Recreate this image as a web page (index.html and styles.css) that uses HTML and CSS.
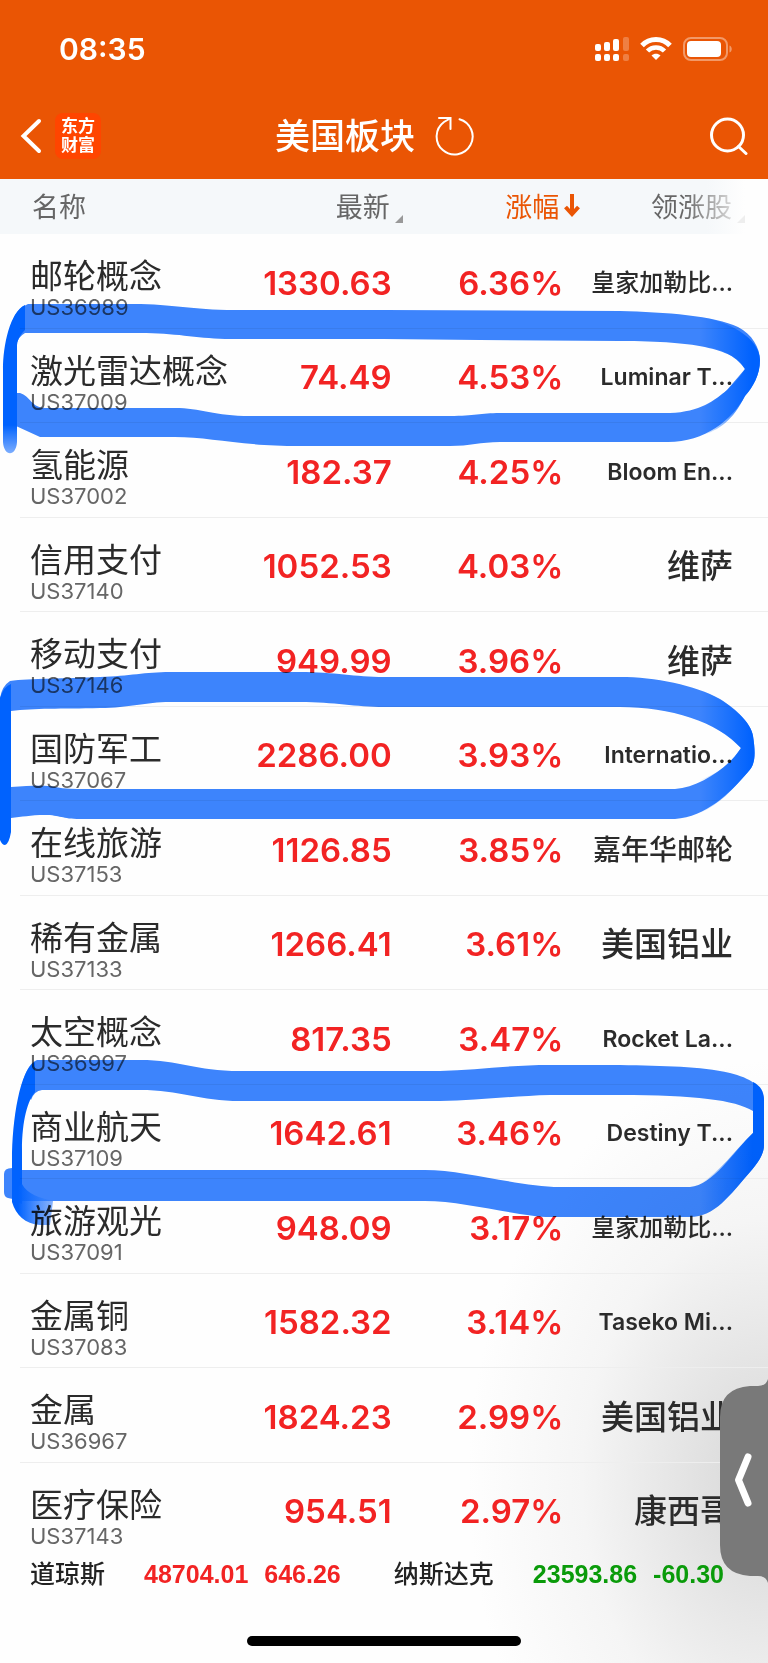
FILE: index.html
```html
<!DOCTYPE html>
<html lang="zh-CN">
<head>
  <meta charset="UTF-8">
  <meta name="viewport" content="width=device-width, initial-scale=1.0">
  <title>美国板块</title>
  <link rel="stylesheet" href="styles.css">
</head>
<body>

<header class="top">
  <div class="status">
    <time class="clock">08:35</time>
    <div class="status-icons">
      <svg width="34" height="26" viewBox="0 0 34 26" fill="#fff">
        <rect x="0" y="8" width="6" height="7" rx="2"/>
        <rect x="9" y="6" width="6" height="9" rx="2"/>
        <rect x="18" y="3" width="6" height="12" rx="2"/>
        <rect x="28" y="1" width="6" height="14" rx="2" opacity=".25"/>
        <rect x="0" y="18" width="6" height="7" rx="2"/>
        <rect x="9" y="18" width="6" height="7" rx="2"/>
        <rect x="18" y="18" width="6" height="7" rx="2"/>
        <rect x="28" y="18" width="6" height="7" rx="2" opacity=".25"/>
      </svg>
      <svg width="32" height="26" viewBox="0 0 32 26" fill="none" stroke="#fff">
        <path d="M2 9.500C9.500 1.500 22.500 1.500 30 9.500" stroke-width="5"/>
        <path d="M7.500 15C12 10.200 20 10.200 24.500 15" stroke-width="4.500"/>
        <path d="M11.500 19.500C14 17 18 17 20.500 19.500L16 24Z" fill="#fff" stroke="none"/>
      </svg>
      <svg width="50" height="26" viewBox="0 0 50 26">
        <rect x="1" y="2" width="43" height="22" rx="7" fill="none" stroke="#fff" stroke-width="2" opacity=".4"/>
        <rect x="4" y="5" width="34" height="16" rx="4" fill="#fff"/>
        <path d="M46.500 9.500C49.500 10.500 49.500 15.500 46.500 16.500Z" fill="#fff" opacity=".4"/>
      </svg>
    </div>
  </div>
  <nav class="nav">
    <div class="nav-left">
      <button class="icon-btn" aria-label="返回">
        <svg width="22" height="36" viewBox="0 0 22 36"><path d="M19 3L3.500 18L19 33" fill="none" stroke="#fff" stroke-width="4" stroke-linecap="round"/></svg>
      </button>
      <a class="logo" href="#">东方<br>财富</a>
    </div>
    <div class="nav-mid">
      <h1 class="title">美国板块</h1>
      <button class="icon-btn" aria-label="刷新">
        <svg width="40" height="40" viewBox="0 0 40 40" fill="none" stroke="#fff" stroke-width="2" stroke-linecap="round">
          <path d="M24.500 3.200A18 18 0 1 1 9 6L15 2.500"/>
          <path d="M4 2H15.500V13"/>
        </svg>
      </button>
    </div>
    <div class="nav-right">
      <button class="icon-btn" aria-label="搜索">
        <svg width="38" height="38" viewBox="0 0 38 38" fill="none" stroke="#fff" stroke-width="3" stroke-linecap="round">
          <circle cx="17.500" cy="18" r="16"/>
          <path d="M28.500 29.500L36 36.500"/>
        </svg>
      </button>
    </div>
  </nav>
</header>

<main class="board">
  <table class="quotes">
    <colgroup>
      <col class="col-name"><col class="col-last"><col class="col-chg"><col class="col-lead">
    </colgroup>
    <thead>
      <tr>
        <th>名称</th>
        <th><span class="sort">最新</span></th>
        <th class="active">涨幅<svg width="16" height="24" viewBox="0 0 16 24"><path d="M8 1V21M1.500 14L8 21L14.500 14" fill="none" stroke="#ea5504" stroke-width="4"/></svg></th>
        <th><span class="sort">领涨股</span></th>
      </tr>
    </thead>
    <tbody>
      <tr><td><a href="#">邮轮概念</a><small>US36989</small></td><td>1330.63</td><td>6.36%</td><td class="sm">皇家加勒比...</td></tr>
      <tr><td><a href="#">激光雷达概念</a><small>US37009</small></td><td>74.49</td><td>4.53%</td><td class="en">Luminar T...</td></tr>
      <tr><td><a href="#">氢能源</a><small>US37002</small></td><td>182.37</td><td>4.25%</td><td class="en">Bloom En...</td></tr>
      <tr><td><a href="#">信用支付</a><small>US37140</small></td><td>1052.53</td><td>4.03%</td><td>维萨</td></tr>
      <tr><td><a href="#">移动支付</a><small>US37146</small></td><td>949.99</td><td>3.96%</td><td>维萨</td></tr>
      <tr><td><a href="#">国防军工</a><small>US37067</small></td><td>2286.00</td><td>3.93%</td><td class="en">Internatio...</td></tr>
      <tr><td><a href="#">在线旅游</a><small>US37153</small></td><td>1126.85</td><td>3.85%</td><td class="md">嘉年华邮轮</td></tr>
      <tr><td><a href="#">稀有金属</a><small>US37133</small></td><td>1266.41</td><td>3.61%</td><td>美国铝业</td></tr>
      <tr><td><a href="#">太空概念</a><small>US36997</small></td><td>817.35</td><td>3.47%</td><td class="en">Rocket La...</td></tr>
      <tr><td><a href="#">商业航天</a><small>US37109</small></td><td>1642.61</td><td>3.46%</td><td class="en">Destiny T...</td></tr>
      <tr><td><a href="#">旅游观光</a><small>US37091</small></td><td>948.09</td><td>3.17%</td><td class="sm">皇家加勒比...</td></tr>
      <tr><td><a href="#">金属铜</a><small>US37083</small></td><td>1582.32</td><td>3.14%</td><td class="en">Taseko Mi...</td></tr>
      <tr><td><a href="#">金属</a><small>US36967</small></td><td>1824.23</td><td>2.99%</td><td>美国铝业</td></tr>
      <tr><td><a href="#">医疗保险</a><small>US37143</small></td><td>954.51</td><td>2.97%</td><td>康西哥</td></tr>
    </tbody>
  </table>
</main>

<footer>
  <div class="ticker">
    <div class="index up"><b>道琼斯</b><span>48704.01</span><span>646.26</span></div>
    <div class="index down"><b>纳斯达克</b><span>23593.86</span><span>-60.30</span></div>
  </div>
  <div class="home-bar"></div>
</footer>

<button class="drawer" aria-label="展开">
  <svg width="48" height="204" viewBox="0 0 48 204">
    <path d="M48 0Q46 7 38 7H30Q0 9 0 38V166Q0 195 30 197H38Q46 197 48 204Z" fill="#797979"/>
    <path d="M28 78L18.500 101L28 124" fill="none" stroke="#fff" stroke-width="7" stroke-linecap="round" stroke-linejoin="round"/>
  </svg>
</button>

<!-- marker circles -->
<svg class="marker" viewBox="0 0 768 1663" fill-rule="evenodd">
  <defs>
    <linearGradient id="turn" gradientUnits="userSpaceOnUse" x1="700" y1="0" x2="752" y2="0">
      <stop offset="0" stop-color="#0062ff" stop-opacity="0"/>
      <stop offset="1" stop-color="#0062ff"/>
    </linearGradient>
    <linearGradient id="fadeA" gradientUnits="userSpaceOnUse" x1="0" y1="425" x2="0" y2="454">
      <stop offset="0" stop-color="#0062ff"/>
      <stop offset="1" stop-color="#0062ff" stop-opacity=".5"/>
    </linearGradient>
    <linearGradient id="tail" gradientUnits="userSpaceOnUse" x1="18" y1="0" x2="54" y2="0">
      <stop offset="0" stop-color="#0062ff"/>
      <stop offset="1" stop-color="#3d85fd" stop-opacity=".6"/>
    </linearGradient>
  </defs>
  <g fill="#3d85fd">
    <path d="M28 304H133C175 304 190 310 235 310H384L620 311C665 312 715 316 738 327C752 334 760 348 760 360C760 375 753 387 745 396C732 420 705 442 668 442H500C480 442 470 446 450 446H300C240 446 210 437 175 437H40L16 426V393H20C30 396 32 408 45 408H175C200 408 215 416 250 416H450C475 416 480 413 500 413H670C700 412 715 400 727 390L745 369C735 350 700 341 620 341L480 340L384 339H225C195 338 175 333 140 333H25Q18 337 16 345L12 322Q17 308 28 304Z"/>
    <path d="M10 681C30 678 65 679 100 677C130 676 145 672 170 672H300C335 672 355 677 384 677H620C655 677 695 685 720 699C737 710 752 725 753 736C756 755 755 765 748 772C730 793 706 817 675 819H80C62 819 60 815 45 815C30 815 22 817 11 818V787C30 786 45 785 55 787C65 789 75 789 85 789H675C700 787 728 768 741 748C718 722 670 707 620 707H384C355 707 335 702 300 702H170C145 702 130 708 100 708C60 709 35 708 11 711L0 698Q2 686 10 681Z"/>
    <path d="M37 1060H140C180 1060 195 1071 240 1071H440C475 1070 510 1065 550 1065H620C665 1066 700 1066 730 1073C750 1078 763 1086 764 1100V1145C764 1155 757 1164 750 1172C730 1195 715 1217 690 1217H550C520 1217 465 1201 425 1201H22L8 1198Q4 1197 4 1192V1174Q4 1168 12 1168L22 1170H425C465 1170 520 1187 560 1187H690C713 1185 733 1153 753 1133V1111C735 1100 695 1095 620 1095H550C510 1096 475 1101 440 1101H240C200 1101 180 1090 140 1090H42Q34 1091 31 1100L22 1085Q27 1064 37 1060Z"/>
  </g>
  <g fill="url(#turn)">
    <path d="M700 317C728 321 760 338 760 360C760 375 753 387 745 396C733 420 720 430 700 436V409C715 402 735 385 745 369C735 355 720 348 700 346Z"/>
    <path d="M700 690C735 703 752 725 753 736C756 755 755 765 748 772C732 790 720 804 700 813V780C720 773 732 762 741 748C730 737 715 726 700 721Z"/>
    <path d="M753 1082C761 1086 764 1092 764 1100V1145C764 1155 757 1164 750 1172C730 1195 718 1211 700 1216V1184C720 1172 735 1150 753 1133Z"/>
  </g>
  <path fill="url(#fadeA)" d="M25 305C10 312 3 345 3 370V442C4 457 16 457 17 442V345C18 338 21 334 25 330Z"/>
  <path fill="#0062ff" d="M0 698Q4 686 11 684V832Q9 844 5 845Q2 845 0 840Z"/>
  <path fill="#0062ff" d="M35 1062C20 1069 12 1120 12 1160V1200L22 1204V1150C22 1120 28 1100 35 1092Z"/>
  <path fill="url(#tail)" d="M12 1190V1202C16 1215 25 1224 40 1225H50L53 1201C40 1198 27 1194 22 1184Z"/>
</svg>

</body>
</html>
```

FILE: styles.css
```css
* { box-sizing: border-box; }
html, body {
  margin: 0;
  padding: 0;
}
body {
  position: relative;
  overflow-x: hidden;
  color: #2b2b2b;
  background: #fefefe radial-gradient(300px 420px at 100% 1480px, #d6d6d6, #e4e4e4 28%, #f5f5f5 62%, #fefefe);
  font-family: Inter, "Noto Sans CJK SC", sans-serif;
}
a { color: inherit; text-decoration: none; }
svg { display: block; }
button {
  background: none;
  border: none;
  padding: 0;
  cursor: pointer;
}

/* header */
.top {
  background: #ea5504;
  color: #fff;
}
.status {
  display: flex;
  justify-content: space-between;
  align-items: center;
  height: 94px;
  padding: 4px 35px 0 59px;
}
.clock {
  font-size: 30px;
  font-weight: 600;
}
.status-icons {
  display: flex;
  gap: 11px;
}
.nav {
  display: grid;
  grid-template-columns: 1fr auto 1fr;
  align-items: center;
  height: 85px;
  padding: 0 20px 2px;
}
.nav-left, .nav-mid, .nav-right {
  display: flex;
  align-items: center;
}
.nav-left { gap: 13px; }
.nav-mid {
  gap: 20px;
  padding-right: 18px;
}
.nav-right { justify-content: flex-end; }
.logo {
  width: 46px;
  padding: 4px 0;
  border-radius: 8px;
  background: #ff4500;
  font-size: 17px;
  font-weight: 700;
  line-height: 19px;
  text-align: center;
}
.title {
  margin: 0;
  font-size: 35px;
  font-weight: 500;
  line-height: 48px;
}

/* table */
.board {
  background: linear-gradient(to right, #f5f8fa 92%, #fefefe 97%) 0 0 / 100% 55px no-repeat;
}
.quotes {
  width: 100%;
  table-layout: fixed;
  border-collapse: collapse;
}
.col-name { width: 31%; }
.col-last { width: 20%; }
.col-chg { width: 23%; }
.col-lead { width: 26%; }
thead tr { height: 55px; }
th {
  padding: 3px 0 0;
  color: #666;
  font-size: 27px;
  font-weight: 400;
  line-height: 36px;
  text-align: right;
}
th:first-child {
  padding-left: 32px;
  text-align: left;
}
th:last-child {
  padding-right: 23px;
  background: linear-gradient(to right, #666 58%, #fefefe 90%);
  background-clip: text;
  color: transparent;
}
th:last-child .sort::after { border-bottom-color: #eee; }
.active { color: #ea5504; }
.active svg {
  display: inline-block;
  margin: 0 -12px 0 5px;
}
.sort::after {
  content: "";
  display: inline-block;
  margin-left: 5px;
  border-left: 8px solid transparent;
  border-bottom: 8px solid #999;
  vertical-align: -6px;
}
th:nth-child(2) .sort { margin-right: -11px; }

/* rows average 94.5px */
tbody tr {
  height: 94px;
  background: linear-gradient(#eee, #eee) 20px 100% / 100% 1px no-repeat;
}
tbody tr:nth-child(odd) { height: 95px; }
tbody tr:last-child { background: none; }
td {
  padding: 2px 0 0;
  color: #f22323;
  font-size: 33px;
  font-weight: 600;
  line-height: 40px;
  text-align: right;
  white-space: nowrap;
}
td:nth-child(3) { padding-right: 5px; }
td:first-child {
  padding: 13px 0 0 30px;
  color: #2b2b2b;
  font-weight: 400;
  text-align: left;
}
td a {
  display: block;
  line-height: 38px;
}
small {
  display: block;
  color: #666;
  font-size: 22px;
  line-height: 24px;
}
td:last-child {
  padding-right: 35px;
  color: #2b2b2b;
  font-weight: 500;
}
td.md { font-size: 28px; }
td.sm { font-size: 24px; }
td.en:last-child {
  font-size: 23px;
  font-weight: 600;
}

/* index ticker */
.ticker {
  display: flex;
  justify-content: space-between;
  padding: 0 44px 0 30px;
  font-family: "Liberation Sans", "Noto Sans CJK SC", sans-serif;
  font-size: 25px;
  font-weight: 700;
  line-height: 34px;
}
.index {
  display: flex;
  gap: 16px;
}
.index b {
  margin-right: 23px;
  color: #222;
  font-weight: 500;
}
.up { color: #f22323; }
.down { color: #0a9b0a; }
.home-bar {
  width: 274px;
  height: 10px;
  margin: 45px auto 17px;
  border-radius: 5px;
  background: #000;
}

.drawer {
  position: absolute;
  top: 1379px;
  right: 0;
}
.marker {
  position: absolute;
  top: 0;
  left: 0;
  width: 100%;
  mix-blend-mode: multiply;
  pointer-events: none;
}
```
